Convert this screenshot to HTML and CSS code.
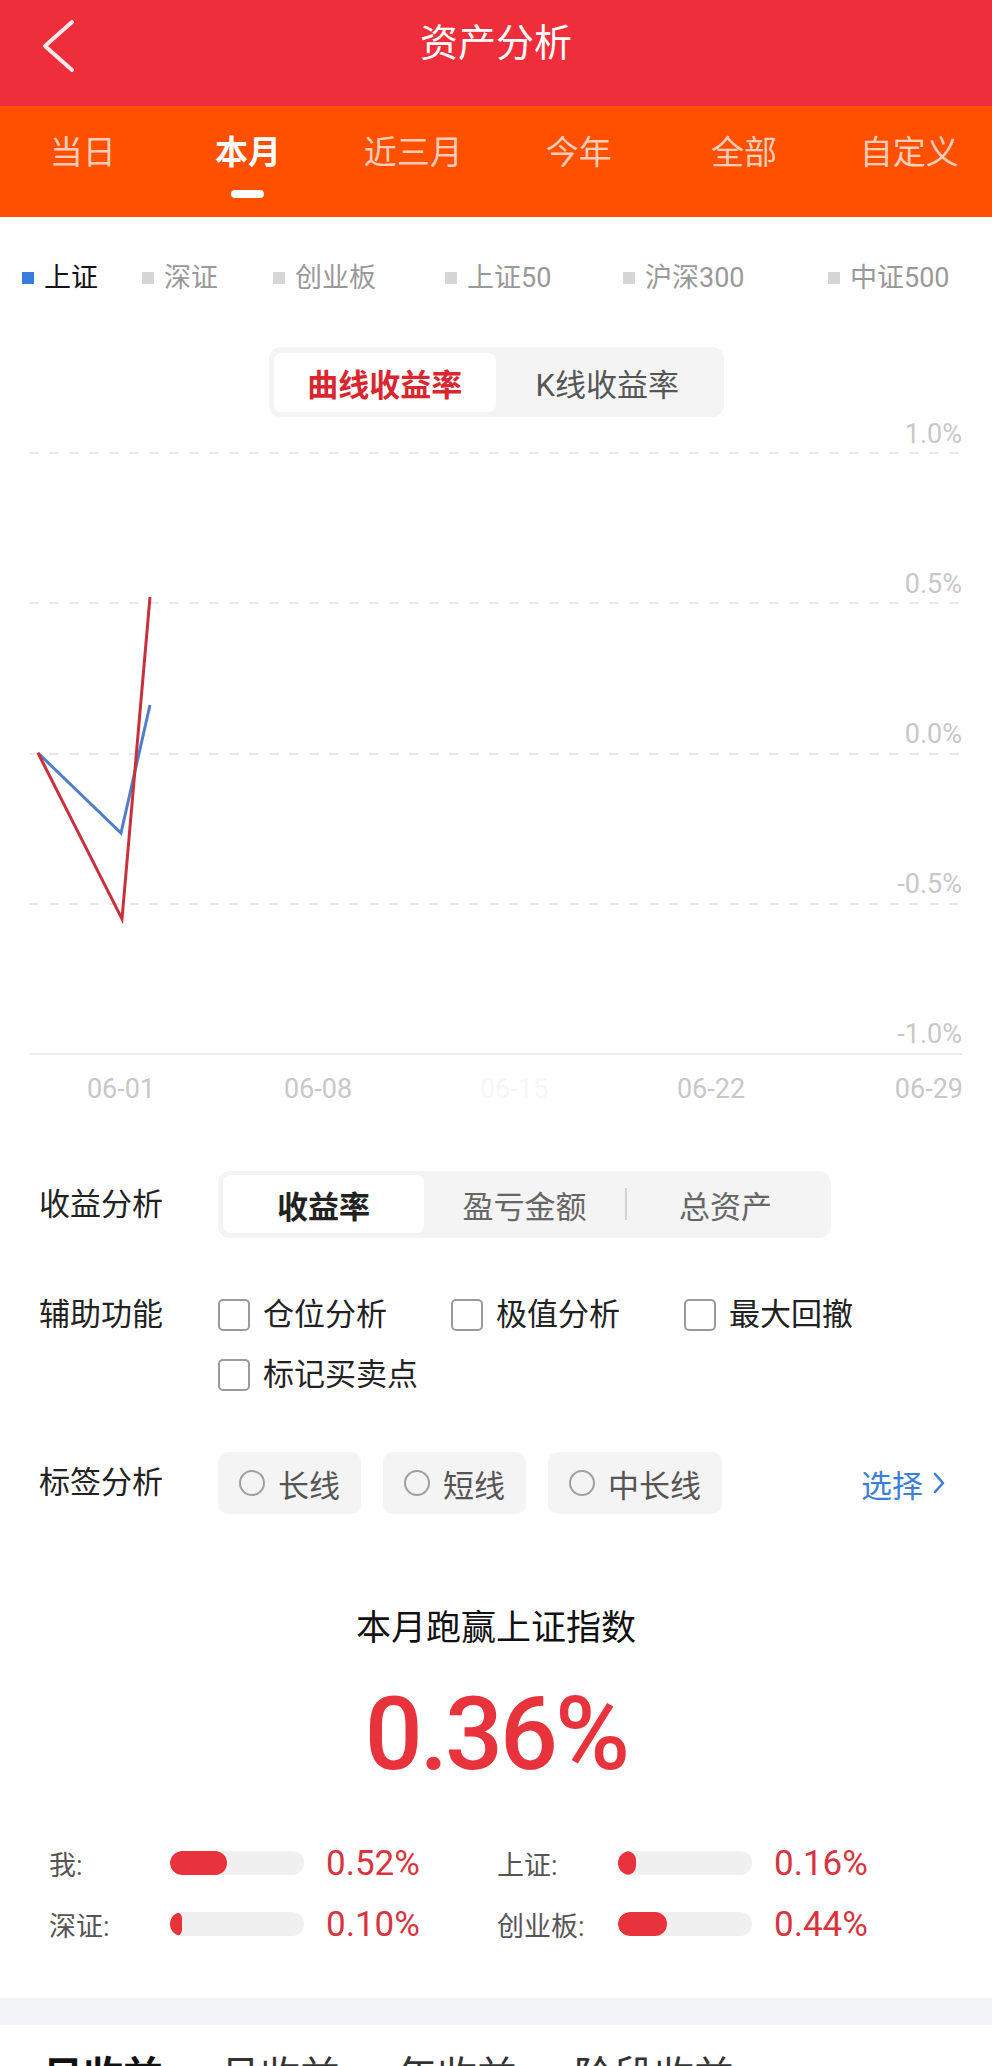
FILE: index.html
```html
<!DOCTYPE html>
<html lang="zh-CN">
<head>
<meta charset="utf-8">
<title>资产分析</title>
<link rel="stylesheet" href="styles.css">
</head>
<body>
<header class="topbar">
  <div class="topbar-side">
    <svg class="back" width="40" height="56" viewBox="0 0 40 56"><path d="M34 4 L7 28 L34 52" fill="none" stroke="#FFE9EB" stroke-width="4" stroke-linecap="round" stroke-linejoin="round"/></svg>
  </div>
  <h1 class="topbar-title">资产分析</h1>
  <div class="topbar-side"></div>
</header>

<nav class="periods">
  <div class="period">当日</div>
  <div class="period active">本月<span class="period-bar"></span></div>
  <div class="period">近三月</div>
  <div class="period">今年</div>
  <div class="period">全部</div>
  <div class="period">自定义</div>
</nav>

<div class="legend">
  <span class="legend-item active"><i class="dot"></i>上证</span>
  <span class="legend-item"><i class="dot"></i>深证</span>
  <span class="legend-item"><i class="dot"></i>创业板</span>
  <span class="legend-item"><i class="dot"></i>上证50</span>
  <span class="legend-item"><i class="dot"></i>沪深300</span>
  <span class="legend-item"><i class="dot"></i>中证500</span>
</div>

<div class="curve-toggle">
  <span class="curve-opt active">曲线收益率</span>
  <span class="curve-opt">K线收益率</span>
</div>

<svg class="chart" width="992" height="703" viewBox="0 0 992 703">
  <g class="grid">
    <line x1="29" x2="962" y1="36" y2="36"/>
    <line x1="29" x2="962" y1="186" y2="186"/>
    <line x1="29" x2="962" y1="337" y2="337"/>
    <line x1="29" x2="962" y1="487" y2="487"/>
  </g>
  <line class="axis" x1="29" x2="962" y1="637" y2="637"/>
  <text class="ylabel" x="962" y="26">1.0%</text>
  <text class="ylabel" x="962" y="176">0.5%</text>
  <text class="ylabel" x="962" y="326">0.0%</text>
  <text class="ylabel" x="962" y="476">-0.5%</text>
  <text class="ylabel" x="962" y="626">-1.0%</text>
  <text class="xlabel" x="121" y="681">06-01</text>
  <text class="xlabel" x="318" y="681">06-08</text>
  <text class="xlabel ghost" x="514" y="681">06-15</text>
  <text class="xlabel" x="711" y="681">06-22</text>
  <text class="xlabel end" x="963" y="681">06-29</text>
  <polyline class="line-blue" points="38,336 121,416 150,288"/>
  <polyline class="line-red" points="38,336 122,502 150,180"/>
</svg>

<section class="controls">
  <div class="ctrl-row row-seg">
    <div class="ctrl-label">收益分析</div>
    <div class="segmented">
      <span class="seg active">收益率</span>
      <span class="seg">盈亏金额</span>
      <span class="seg divided">总资产</span>
    </div>
  </div>

  <div class="ctrl-row row-checks">
    <div class="ctrl-label">辅助功能</div>
    <div class="checks">
      <span class="check"><i class="box"></i>仓位分析</span>
      <span class="check"><i class="box"></i>极值分析</span>
      <span class="check"><i class="box"></i>最大回撤</span>
      <span class="check"><i class="box"></i>标记买卖点</span>
    </div>
  </div>

  <div class="ctrl-row row-tags">
    <div class="ctrl-label">标签分析</div>
    <div class="chips">
      <span class="chip"><i class="radio"></i>长线</span>
      <span class="chip"><i class="radio"></i>短线</span>
      <span class="chip"><i class="radio"></i>中长线</span>
    </div>
    <span class="pick">选择<svg width="14" height="24" viewBox="0 0 14 24"><path d="M3 3 L11 12 L3 21" fill="none" stroke="#3D7FD8" stroke-width="2.6" stroke-linecap="round" stroke-linejoin="round"/></svg></span>
  </div>
</section>

<section class="summary">
  <h2 class="summary-title">本月跑赢上证指数</h2>
  <div class="summary-value">0.36%</div>
  <div class="bars">
    <div class="bar-cell"><span class="bar-label">我:</span><span class="track"><span class="fill" style="width:57px"></span></span><span class="bar-value">0.52%</span></div>
    <div class="bar-cell"><span class="bar-label">上证:</span><span class="track"><span class="fill" style="width:18px"></span></span><span class="bar-value">0.16%</span></div>
    <div class="bar-cell"><span class="bar-label">深证:</span><span class="track"><span class="fill" style="width:12px"></span></span><span class="bar-value">0.10%</span></div>
    <div class="bar-cell"><span class="bar-label">创业板:</span><span class="track"><span class="fill" style="width:49px"></span></span><span class="bar-value">0.44%</span></div>
  </div>
</section>

<div class="band"></div>

<div class="ret-tabs">
  <span class="ret-tab active">日收益</span>
  <span class="ret-tab">月收益</span>
  <span class="ret-tab">年收益</span>
  <span class="ret-tab">阶段收益</span>
</div>
</body>
</html>
```

FILE: styles.css
```css
html, body {
  margin: 0;
  padding: 0;
  background: #fff;
}
body {
  width: 992px;
  font-family: Roboto, "Noto Sans CJK SC", sans-serif;
  color: #222;
  overflow: hidden;
}

/* top bar */
.topbar {
  display: grid;
  grid-template-columns: 1fr auto 1fr;
  align-items: start;
  height: 106px;
  background: #EE2F3B;
}
.back {
  display: block;
  margin: 18px 0 0 38px;
}
.topbar-title {
  margin: 0;
  font-size: 38px;
  line-height: 86px;
  font-weight: 400;
  color: #fff;
}

/* period tabs */
.periods {
  display: grid;
  grid-template-columns: repeat(6, 1fr);
  height: 111px;
  background: #FF5000;
}
.period {
  display: flex;
  flex-direction: column;
  align-items: center;
  padding-top: 27px;
  font-size: 33px;
  line-height: 40px;
  color: rgba(255, 255, 255, 0.72);
}
.period.active {
  color: #fff;
  font-weight: 700;
}
.period-bar {
  width: 33px;
  height: 8px;
  margin-top: 17px;
  border-radius: 4px;
  background: #fff;
}

/* legend */
.legend {
  display: grid;
  grid-template-columns: 120px 131px 172px 178px 205px 1fr;
  padding-left: 22px;
  margin-top: 43px;
  font-size: 27px;
  line-height: 36px;
  color: #999;
}
.legend-item {
  display: flex;
  align-items: center;
  gap: 10px;
  white-space: nowrap;
}
.dot {
  width: 12px;
  height: 12px;
  background: #D6D6D6;
  flex: none;
}
.legend-item.active {
  color: #111;
}
.legend-item.active .dot {
  background: #3B7BE0;
}

/* curve toggle */
.curve-toggle {
  display: flex;
  width: 455px;
  height: 70px;
  box-sizing: border-box;
  padding: 6px 5px 5px;
  margin: 51px auto 0;
  background: #F4F4F4;
  border-radius: 12px;
}
.curve-opt {
  flex: 1;
  display: flex;
  align-items: center;
  justify-content: center;
  font-size: 31px;
  color: #555;
  border-radius: 8px;
}
.curve-opt.active {
  background: #fff;
  color: #D9262F;
  font-weight: 700;
}

/* chart */
.chart {
  display: block;
}
.grid line {
  stroke: #E8E8E8;
  stroke-width: 2;
  stroke-dasharray: 10 10;
}
.axis {
  stroke: #ECECEC;
  stroke-width: 2;
}
.ylabel {
  font-family: Roboto, sans-serif;
  font-size: 27px;
  fill: #C8C8C8;
  text-anchor: end;
}
.xlabel {
  font-family: Roboto, sans-serif;
  font-size: 27px;
  fill: #C8C8C8;
  text-anchor: middle;
}
.xlabel.end {
  text-anchor: end;
}
.xlabel.ghost {
  fill: #F6F6F6;
}
.line-blue {
  fill: none;
  stroke: #4F7FCB;
  stroke-width: 3;
}
.line-red {
  fill: none;
  stroke: #C9303B;
  stroke-width: 3;
}

/* controls */
.ctrl-row {
  display: flex;
  padding-left: 39px;
}
.ctrl-label {
  width: 179px;
  flex: none;
  font-size: 31px;
  line-height: 32px;
  color: #222;
}
.row-seg {
  align-items: center;
  margin-top: 51px;
}
.segmented {
  display: flex;
  width: 613px;
  height: 67px;
  box-sizing: border-box;
  padding: 4px 5px 5px;
  background: #F4F4F4;
  border-radius: 12px;
}
.seg {
  flex: 1;
  display: flex;
  align-items: center;
  justify-content: center;
  font-size: 31px;
  color: #666;
  border-radius: 8px;
}
.seg.active {
  background: #fff;
  color: #222;
  font-weight: 700;
}
.seg.divided {
  background: linear-gradient(#D4D4D4, #D4D4D4) left center / 2px 32px no-repeat;
}

.row-checks {
  align-items: flex-start;
  margin-top: 61px;
}
.checks {
  display: flex;
  flex-wrap: wrap;
  width: 700px;
  row-gap: 28px;
}
.check {
  width: 233px;
  display: flex;
  align-items: center;
  gap: 13px;
  font-size: 31px;
  line-height: 32px;
  color: #222;
}
.box {
  width: 32px;
  height: 32px;
  box-sizing: border-box;
  border: 2px solid #9A9A9A;
  border-radius: 5px;
  flex: none;
}

.row-tags {
  align-items: center;
  margin-top: 61px;
}
.chips {
  display: flex;
  gap: 22px;
}
.chip {
  display: flex;
  align-items: center;
  height: 62px;
  padding: 0 21px;
  gap: 13px;
  background: #F4F4F4;
  border-radius: 10px;
  font-size: 31px;
  color: #555;
}
.radio {
  width: 26px;
  height: 26px;
  box-sizing: border-box;
  border: 2px solid #A0A0A0;
  border-radius: 50%;
  flex: none;
}
.pick {
  margin-left: auto;
  margin-right: 46px;
  display: flex;
  align-items: center;
  gap: 9px;
  font-size: 31px;
  color: #3D7FD8;
}
.pick svg {
  display: block;
}

/* summary */
.summary-title {
  margin: 93px 0 0;
  text-align: center;
  font-size: 35px;
  line-height: 44px;
  font-weight: 400;
  color: #111;
}
.summary-value {
  margin-top: 32px;
  text-align: center;
  font-family: Roboto, sans-serif;
  font-weight: 500;
  font-size: 102px;
  line-height: 102px;
  letter-spacing: -3px;
  color: #E8333C;
}
.bars {
  display: grid;
  grid-template-columns: 448px 1fr;
  row-gap: 17px;
  padding-left: 49px;
  margin-top: 56px;
}
.bar-cell {
  display: flex;
  align-items: center;
  height: 44px;
}
.bar-label {
  width: 121px;
  flex: none;
  font-size: 27px;
  color: #555;
}
.track {
  display: block;
  width: 134px;
  height: 24px;
  flex: none;
  border-radius: 12px;
  background: #F0F0F0;
  overflow: hidden;
}
.fill {
  display: block;
  height: 100%;
  border-radius: 12px;
  background: #E8333C;
}
.bar-value {
  margin-left: 22px;
  font-family: Roboto, sans-serif;
  font-size: 35px;
  color: #D9343E;
}

.band {
  height: 27px;
  margin-top: 52px;
  background: #F3F4F8;
}

.ret-tabs {
  display: flex;
  gap: 57px;
  padding: 28px 0 20px 43px;
  font-size: 40px;
  line-height: 48px;
  color: #333;
}
.ret-tab.active {
  font-weight: 700;
  color: #111;
}
```
